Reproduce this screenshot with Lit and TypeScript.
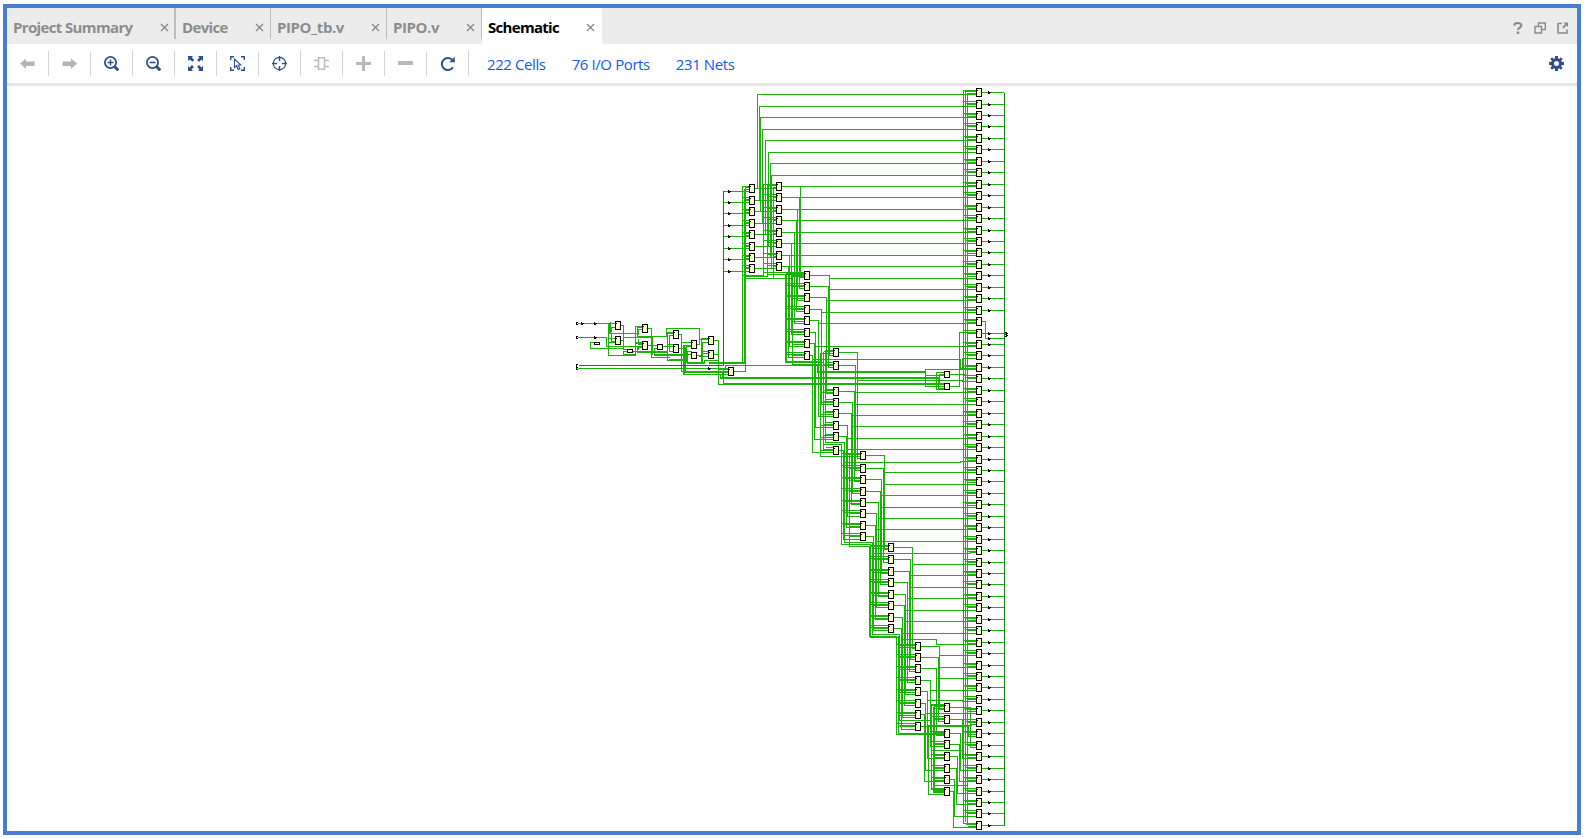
import { LitElement, html, svg, css } from "lit";
import { customElement } from "lit/decorators.js";

/* Routes are drafted in thirds of a pixel, relative to the origin of a sheet. */
interface Sheet { x: number; y: number; routes: string; }

const snap = (s: Sheet): string =>
  s.routes.replace(/([MHV])\s*(-?\d+)(?:\s+(-?\d+))?/g, (_m, c, a, b) => {
    const n = (v: string, o: number) => o + Math.floor(Number(v) / 3) + 0.5;
    if (c === "M") return `M${n(a, s.x)} ${n(b, s.y)}`;
    return c === "H" ? `H${n(a, s.x)}` : `V${n(a, s.y)}`;
  });

const OUT = [92,104,115,126,138,149,161,172,184,195,207,218,230,241,252,264,275,287,298,310,321,333,344,355,367,378,390,401,413,424,436,447,459,470,481,493,504,516,527,539,550,562,573,584,596,607,619,630,642,653,665,676,687,699,710,722,733,745,756,768,779,791,802,813,825];

/* Register columns: left edge, row centres and the x of the three shared nets. */
const COLUMNS: { x: number; rows: number[]; bus: number[] }[] = [
  { x: 749, rows: [188,200,211,223,234,246,257,268], bus: [742, 744, 745] },
  { x: 776, rows: [186,197,209,220,232,243,255,266], bus: [763, 767, 773] },
  { x: 804, rows: [275,286,297,309,320,332,343,355], bus: [785, 786, 792] },
  { x: 833, rows: [352,365,391,402,413,425,436,450], bus: [825, 823, 820] },
  { x: 860, rows: [455,468,479,491,502,513,525,536], bus: [841, 844, 849] },
  { x: 888, rows: [547,559,571,582,594,605,617,628], bus: [870, 869, 872] },
  { x: 915, rows: [646,657,668,680,691,703,714,726], bus: [896, 898, 899] },
  { x: 944, rows: [707,719,733,744,756,768,779,791], bus: [931, 934, 933] },
  { x: 976, rows: OUT, bus: [963, 965, 967] },
];

const taps = (): string =>
  COLUMNS.map((c) =>
    c.rows.map((y, i) => {
      const d = i % 2 ? [-3, -1, 0] : [-2, -1, 1];
      return c.bus.map((b, k) => `M${b + 0.5} ${y + d[k] + 0.5}H${c.x}`).join("");
    }).join("")
  ).join("");

const SHEETS: Sheet[] = [
  { x: 560, y: 310, routes: `
    M54 40H165 M54 82H139V109H246 M54 175H504 M145 40V136H226V97 M148 43V70H234 M165 52H154V64 M154 73V94H165
    M145 97H165 M148 85H165 M150 37V70 M183 46H190V118H201 M183 91H190 M190 82H277 M102 97H91V115H190 M201 124H190V133H226
    M219 124H232 M226 49V136 M226 49H246 M232 52H246 M232 52V79H319V55H418V97 M235 58V73 M235 58H246 M235 88V103H246
    M226 97H246 M226 100H246 M232 112V127H322 M232 124H322 M246 112H235V118 M264 55H274V142H327 M264 106H291 M291 115H283V136H367
    M308 109H339 M277 82V133 M322 70V151H381 M322 70H339 M328 76H339 M328 76V94 M322 67H339 M328 97V124H339 M322 103H339
    M283 133H393 M328 148H381 M357 73H364V184H504 M357 115H367 M364 97H393 M370 106V193H474 M370 106H393 M373 109V190
    M393 109H379V157H434 M382 127V160H433 M382 124H393 M376 112V187H504 M411 103H418V88H444 M424 88V160 M427 97V157
    M427 97H444 M424 85H444 M411 136H421 M418 136V139H444 M424 124H444 M427 130H444 M462 91H475V223H600 M462 133H475
    M475 151H433V160 M448 160H556 M448 157H547V0 M553 0V160 M556 0V184H522 M475 178H504 M490 175V220H600
    M487 187V205H600 M481 193V202H600 M600 166H496V178 M370 193H504` },
  { x: 710, y: 80, routes: `
    M117 319H97V850H0 M117 328H103V847H0 M106 325V874H71 M97 586H160V313 M103 589H172V316 M106 595H247 M190 322V595
    M135 325H198 M135 361H198 M135 394H198 M135 430H198 M135 463H198 M135 499H198 M135 532H198 M135 565H198
    M142 325V43H798 M148 361V79H798 M151 394V112H798 M157 430V148H798 M166 463V181H798 M175 499V217H798 M181 532V250H798 M184 565V286H798
    M216 319H798 M216 352H798 M216 388H798 M216 421H798 M216 457H798 M216 490H798 M216 526H798 M216 559H798
    M271 319V592H282 M268 352V625H282 M262 388V661H282 M259 421V694H282 M253 457V730H282 M244 490V763H282 M238 526V799H282 M235 559V832H282
    M160 577H282 M172 583H226V847H340 M229 577V844H331 M282 586H247V854H331
    M160 313V586 M172 316V589 M40 334H117 M40 367H117 M40 400H117 M40 436H117 M40 469H117 M40 505H117 M40 538H117 M40 574H117
    M760 31V2230 M766 34V2224 M772 40V2230` },
  { x: 710, y: 260, routes: `
    M300 46H358V286H369 M358 55H798 M300 79H355V322H369 M355 88H798 M300 112H349V400H369 M349 121H798
    M300 148H334V433H369 M334 157H798 M300 181H325V469H369 M325 190H798 M300 217H316V502H369 M316 259H798
    M300 250H313V538H369 M300 286H307V577H369 M307 298H751V325H798 M322 334H646 M322 337H646 M322 313V337
    M46 316H334 M46 316V328 M30 352H685 M30 355H685 M40 370H702 M40 373H702 M798 328H646V379H702 M646 346H702
    M702 337H679V388H702 M685 352V385H702 M702 343H688V370H702 M720 343H766 M720 379H748V217H798 M798 295H757V328 M757 361V364H798
    M331 280V589H450 M340 277V568H369 M346 271V547H403V600 M340 553H394V600
    M387 277H442V595H450 M442 361H757 M387 316H436V631H450 M436 433H798 M387 394H433V664H450 M433 397H798
    M387 427H427V700H450 M427 466H798 M387 460H424V733H450 M427 499H798 M387 496H412V769H450 M412 535H798
    M387 529H409V802H450 M409 568H798 M387 571H400V838H450 M816 184H826V235H884 M816 220H888` },
  { x: 790, y: 430, routes: `
    M100 43H154V343H241 M106 37H163V337H247 M178 76V349H238 M91 79H210 M163 97H511V94H558
    M228 76H283V358H294 M283 127H558 M283 163H558 M228 115H280V397H294 M228 148H274V430H294 M274 196H558
    M228 184H271V463H294 M271 232H558 M228 217H265V499H294 M265 265H558 M228 250H259V532H294 M259 298H558
    M228 286H256V568H294 M259 334H558 M228 319H250V601H294 M250 370H541V367H558
    M238 349V619H319 M241 343V622H325 M247 337V613H328
    M312 352H367V655H375 M367 403H558 M312 388H361V688H375 M361 436H558 M361 472H558 M312 424H358V724H375
    M312 457H352V757H375 M352 505H558 M312 493H346V793H375 M346 541H558 M346 574H558 M312 526H343V826H375
    M312 562H337V862H375 M337 610H558 M312 595H334V898H375 M334 628H439V643H558` },
  { x: 860, y: 620, routes: `
    M109 49V343H226 M115 49V340H252 M118 43V301H211 M183 79H238V268H252 M238 106H348 M238 142H348
    M183 112H235V304H252 M183 145H229V346H252 M229 175H348 M183 181H211V379H252 M211 211H348
    M183 214H202V415H252 M202 241H307V244H348 M183 250H196V451H252 M196 280H348 M183 283H193V484H252
    M183 319H205V523H252 M205 316H334V313H348 M196 319H325V349H348 M214 253V508H252 M214 253H252 M220 262V517H252 M223 259V514 M223 496H322 M214 391H307
    M270 262H331V382H348 M270 298H307V415H348 M270 340H301V451H348 M270 373H298V484H348 M270 409H292V520H348
    M270 445H289V553H348 M270 478H283V589H348 M270 514H280V622H348` },
];

const TRUNKS: Sheet[] = [
  { x: 560, y: 310, routes: "M54 166H490V-359" },
  { x: 710, y: 80, routes: "M884 37V2235" },
];

const CELLS: number[][] = [
  [615,321,9],[615,336,9],[642,324,9],[642,341,9],[673,330,9],[673,344,9],[708,336,9],[708,350,9],[728,367,9],
  [691,340,9],[691,352,7],[657,344,6],[594,342,3],[627,349,4],[944,371,7],[944,383,7],
];

const BUFFERS: number[][] = [
  [581,323],[594,323],[594,337],[708,368],[988,338],
  ...[191,202,213,225,236,248,259,271].map((y) => [728, y]),
  ...OUT.filter((y) => y !== 321).map((y) => [988, y]),
];

const cell = (x: number, y: number, h: number) => svg`
  <rect x=${x + 0.5} y=${y + 0.5} width="5" height=${h - 1} class="cell"></rect>
  ${h === 9 ? svg`<rect x=${x + 1} y=${y + 2} width="1" height="1"></rect>` : ""}`;

@customElement("schematic-canvas")
export class SchematicCanvas extends LitElement {
  static styles = css`
    :host { display: block; flex: 1; min-height: 0; overflow: hidden; background: #fff; }
    svg { display: block; shape-rendering: crispEdges; }
    .net { fill: none; stroke: #1ab208; stroke-width: 1; stroke-linecap: square; }
    .tap { fill: none; stroke: #1ab208; stroke-width: 1; }
    .trunk { fill: none; stroke: #0a830a; stroke-width: 1; }
    .cell { fill: #fffacd; stroke: #000; stroke-width: 1; }
  `;
  render() {
    return html`<svg width="1570" height="745" viewBox="7 86 1570 745">
      <path class="tap" d=${taps()}></path>
      ${SHEETS.map((s) => svg`<path class="net" d=${snap(s)}></path>`)}
      ${OUT.map((y) => svg`<path class="tap" d=${y === 321 ? "" : `M982 ${y + 0.5}H1004`}></path>`)}
      ${TRUNKS.map((s) => svg`<path class="trunk" d=${snap(s)}></path>`)}
      ${COLUMNS.map((c) => c.rows.map((y) => cell(c.x, y - 4, 9)))}
      ${CELLS.map(([x, y, h]) => cell(x, y, h))}
      ${BUFFERS.map(([x, y]) => svg`<path d="M${x} ${y - 1}h1v1h2v1h-1v1h-2z"></path>`)}
      <path d="M576 322h2v1h-1v1h1v1h-2zM576 336h2v1h-1v1h1v1h-2zM576 364h2v1h-1v2h1v1h-1v1h1v1h-2zM1005 332h2v1h-2zM1006 333h2v1h-2zM1005 334h2v1h-2zM1006 335h2v1h-2zM1005 336h2v1h-2z"></path>
    </svg>`;
  }
}

const ICONS = [
  svg`<path fill="#b4b4b4" d="M0 7.500L6 2.500V5.500H14.500V10H6V13z"></path>`,
  svg`<path fill="#b4b4b4" d="M15 7.500L9 2.500V5.500H.5V10H9V13z"></path>`,
  svg`<g fill="none" stroke="#2f4f8a"><circle cx="6.500" cy="6.500" r="5.600" stroke-width="1.800"></circle><path stroke-width="1.400" d="M3.500 6.500h6M6.500 3.500v6"></path><path stroke-width="3" d="M10.500 10.500l3.800 3.800"></path></g>`,
  svg`<g fill="none" stroke="#2f4f8a"><circle cx="6.500" cy="6.500" r="5.600" stroke-width="1.800"></circle><path stroke-width="1.600" d="M3.500 6.500h6"></path><path stroke-width="3" d="M10.500 10.500l3.800 3.800"></path></g>`,
  svg`<path fill="#2f4f8a" d="M0 0h5L3.700 1.500l2.500 2.500-1.800 1.800L1.700 3.400.2 5zM15 0v5l-1.500-1.500L11 5.900 9.100 4.100 11.500 1.600 10 0zM0 15v-5l1.500 1.500L4 9.100l1.900 1.800L3.500 13.400 5 15zM15 15h-5l1.500-1.500L9.100 11 11 9.100l2.400 2.400L15 10z"></path>`,
  svg`<g fill="none" stroke="#2f4f8a"><path stroke-width="1.400" d="M.7 4V.7H4M11 .7h3.300V4M.7 11v3.300H4M11 14.300h3.300V11"></path><path stroke-width="1.100" d="M4.500 3v8.500l2-1.800 1.700 3.800 1.700-.8-1.700-3.500 2.500-.3z"></path></g>`,
  svg`<g fill="none" stroke="#2f4f8a" stroke-width="1.200"><circle cx="7.500" cy="7.500" r="6.200"></circle><path stroke-width="1.500" d="M7.500 0v5M7.500 10v5M0 7.500h5M10 7.500h5"></path></g>`,
  svg`<g fill="none" stroke="#bcbcbc" stroke-width="1.500"><path d="M4.500 1.700h6v11.600h-6zM0 4.500h4.500M0 10.500h4.500M10.500 4.500H15M10.500 10.500H15"></path></g>`,
  svg`<path fill="#b8b8b8" d="M6 0h3v6h6v3H9v6H6V9H0V6h6z"></path>`,
  svg`<path fill="#b8b8b8" d="M0 5h15v4H0z"></path>`,
  svg`<path fill="none" stroke="#2f4f8a" stroke-width="2" d="M12 3.600A6 6 0 1 0 13 11.200"></path><path fill="#2f4f8a" d="M14.800 .8v5.400H9.200z"></path>`,
];

@customElement("app-root")
export class AppRoot extends LitElement {
  static styles = css`
    :host { display: block; height: 838px; box-sizing: border-box; padding: 4px 3px 3px; background: #fff; overflow: hidden; font-family: "Open Sans", "Noto Sans", sans-serif; }
    .frame { box-sizing: border-box; width: 1578px; height: 831px; border: 4px solid #4a7dcf; display: flex; flex-direction: column; }
    .tabs { display: flex; height: 36px; background: #ececec; flex: none; }
    .tab { box-sizing: border-box; height: 31px; display: flex; align-items: center; justify-content: space-between; padding: 6px 6px 0 6px; border-right: 1px solid #bdbdbd; color: #8c8c8c; font-weight: 700; font-size: 15px; line-height: 24px; white-space: nowrap; }
    .first { width: 169px; border-right-width: 2px; padding-right: 5px; }
    .device { width: 95px; }
    .bench { width: 116px; }
    .source { width: 95px; }
    .active { width: 120px; height: 36px; background: #fff; color: #000; border: 0; padding: 1px 7px 0 6px; }
    .label { display: block; }
    .close { width: 9px; height: 9px; flex: none; margin-top: 1px; }
    .window { display: flex; gap: 11px; align-items: center; margin-left: auto; padding: 4px 9px 0 0; }
    .tools { display: flex; height: 39px; border-bottom: 3px solid #e6e6e6; align-items: center; flex: none; }
    .tool { box-sizing: border-box; width: 42px; height: 25px; border-right: 1px solid #d4d4d4; display: flex; align-items: center; justify-content: center; }
    .stats { display: flex; color: #1258f5; font-size: 15px; line-height: 20px; padding: 0 0 0 18px; gap: 26px; white-space: nowrap; }
    .gear { margin-left: auto; margin-right: 13px; }
    svg { display: block; }
    .s1 { letter-spacing: -0.64px; }
    .s2 { letter-spacing: -0.65px; }
    .s3 { letter-spacing: -0.42px; }
    .s5 { letter-spacing: -0.7px; }
    .stat { letter-spacing: -0.4px; }
  `;

  private tab(label: string, kind: string, tune: string) {
    return html`<div class="tab ${kind}"><span class="label ${tune}">${label}</span>
      <svg class="close" viewBox="0 0 9 9"><path d="M1 1l7 7M8 1l-7 7" stroke="#858585" stroke-width="1.300"></path></svg></div>`;
  }

  render() {
    return html`<div class="frame">
      <div class="tabs">
        ${this.tab("Project Summary", "first", "s1")}
        ${this.tab("Device", "device", "s2")}
        ${this.tab("PIPO_tb.v", "bench", "s3")}
        ${this.tab("PIPO.v", "source", "s3")}
        ${this.tab("Schematic", "active", "s5")}
        <div class="window">
          <svg width="10" height="12" viewBox="0 0 10 12"><path d="M1 3.500C1.300 1.700 2.800 1 4.700 1 7 1 8.400 2 8.400 3.600 8.400 5.600 5 5.600 5 8" fill="none" stroke="#8a8a8a" stroke-width="2"></path><path d="M3.800 9.500h2.400V12H3.800z" fill="#8a8a8a"></path></svg>
          <svg width="12" height="12" viewBox="0 0 12 12"><path d="M4.500 4V1h6.800v6.500H7.500M1 4.500h6.500V11H1z" fill="none" stroke="#8a8a8a" stroke-width="1.400"></path></svg>
          <svg width="11" height="12" viewBox="0 0 11 12"><path d="M5 1.500H1V11h9V7.500" fill="none" stroke="#8a8a8a" stroke-width="1.600"></path><path d="M6.500 .5H11V5L9.500 3.500 6.500 6.500 5.300 5.300 8 2z" fill="#8a8a8a"></path></svg>
        </div>
      </div>
      <div class="tools">
        ${ICONS.map((icon) => html`<div class="tool"><svg width="15" height="15" viewBox="0 0 15 15">${icon}</svg></div>`)}
        <div class="stats"><span class="stat">222 Cells</span><span class="stat">76 I/O Ports</span><span class="stat">231 Nets</span></div>
        <svg class="gear" width="15" height="15" viewBox="0 0 15 15"><g stroke="#2f4f8a" fill="none"><circle cx="7.500" cy="7.500" r="4" stroke-width="3"></circle><path stroke-width="3" d="M7.500 0v3M7.500 12v3M0 7.500h3M12 7.500h3"></path><path stroke-width="2.600" d="M2.200 2.200l2 2M10.800 10.800l2 2M2.200 12.800l2-2M10.800 4.200l2-2"></path></g></svg>
      </div>
      <schematic-canvas></schematic-canvas>
    </div>`;
  }
}
